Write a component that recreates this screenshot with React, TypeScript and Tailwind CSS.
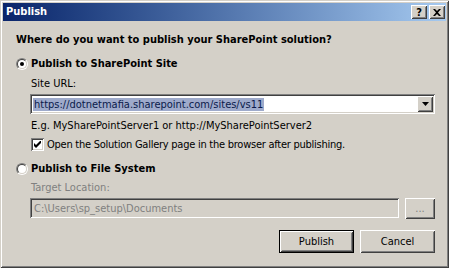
import type { ReactNode } from "react";

const font = { fontFamily: '"DejaVu Sans Condensed", Tahoma, "Liberation Sans", sans-serif' };

const sunken =
  "shadow-[inset_1px_1px_0_#808080,inset_-1px_-1px_0_#ffffff,inset_2px_2px_0_#404040,inset_-2px_-2px_0_#d4d0c8]";
const raised =
  "shadow-[inset_1px_1px_0_#ffffff,inset_-1px_-1px_0_#404040,inset_2px_2px_0_#d4d0c8,inset_-2px_-2px_0_#808080]";

function Radio({ checked }: { checked?: boolean }) {
  return (
    <div className="flex h-3 w-3 shrink-0 items-center justify-center rounded-full border border-t-[#808080] border-r-white border-b-white border-l-[#808080]">
      <div className="flex h-2.5 w-2.5 items-center justify-center rounded-full border border-t-[#404040] border-r-[#d4d0c8] border-b-[#d4d0c8] border-l-[#404040] bg-white">
        {checked && <div className="h-1 w-1 rounded-full bg-black" />}
      </div>
    </div>
  );
}

function Checkbox() {
  return (
    <div className={`flex h-[13px] w-[13px] shrink-0 items-center justify-center bg-white ${sunken}`}>
      <svg width="7" height="7" viewBox="0 0 7 7">
        <path d="M0 2v3l2 2l5-5v-3l-5 5z" fill="#000" />
      </svg>
    </div>
  );
}

function Button({ children, isDefault }: { children: ReactNode; isDefault?: boolean }) {
  return (
    <div className={`h-[23px] w-[75px] ${isDefault ? "border border-black" : ""}`}>
      <div className={`flex h-full w-full items-center justify-center text-[11px] text-black ${raised}`}>{children}</div>
    </div>
  );
}

export default function App() {
  return (
    <div
      className="h-[268px] w-[449px] bg-[#d4d0c8] p-[3px] shadow-[inset_1px_1px_0_#d4d0c8,inset_-1px_-1px_0_#404040,inset_2px_2px_0_#ffffff,inset_-2px_-2px_0_#808080] overflow-hidden"
      style={font}
    >
      {/* title bar */}
      <div className="flex h-[18px] items-center justify-between bg-gradient-to-r from-[#0a246a] to-[#a6caf0] pr-[1px] pl-[3px]">
        <span className="text-[11px] font-bold text-white">Publish</span>
        <div className="flex gap-[2px]">
          <div className={`flex h-[14px] w-[16px] items-center justify-center bg-[#d4d0c8] text-[11px] font-bold leading-none text-black ${raised}`}>?</div>
          <div className={`flex h-[14px] w-[16px] items-center justify-center bg-[#d4d0c8] ${raised}`}>
            <svg width="8" height="7" viewBox="0 0 8 7">
              <path d="M0 0h2l2 2l2-2h2l-3 3.5l3 3.5h-2l-2-2l-2 2h-2l3-3.5z" fill="#000" />
            </svg>
          </div>
        </div>
      </div>

      <div className="pr-[11px] pl-[13px] text-[11px] leading-[13px] text-black">
        <div className="mt-[12px] h-[13px] font-bold">Where do you want to publish your SharePoint solution?</div>

        <div className="mt-[11px] flex h-[13px] items-center gap-[3px]">
          <Radio checked />
          <span className="font-bold">Publish to SharePoint Site</span>
        </div>

        <div className="pl-[14px]">
          <div className="mt-[7px] h-[13px] pl-[1px]">Site URL:</div>
          <div className={`mt-[4px] flex h-[20px] items-center justify-between bg-white pr-[2px] pl-[2px] ${sunken}`}>
            <span className="ml-[1px] bg-[#9eaacb] px-[1px] text-[#0a1a4a]">https://dotnetmafia.sharepoint.com/sites/vs11</span>
            <div className={`flex h-[16px] w-[16px] items-center justify-center bg-[#d4d0c8] ${raised}`}>
              <svg width="7" height="4" viewBox="0 0 7 4">
                <path d="M0 0h7l-3.5 4z" fill="#000" />
              </svg>
            </div>
          </div>
          <div className="mt-[5px] h-[13px] pl-[1px]">E.g. MySharePointServer1 or http://MySharePointServer2</div>
          <div className="mt-[6px] flex h-[13px] items-center gap-[3px] pl-[1px]">
            <Checkbox />
            <span className="tracking-[-0.25px]">Open the Solution Gallery page in the browser after publishing.</span>
          </div>
        </div>

        <div className="mt-[11px] flex h-[13px] items-center gap-[3px]">
          <Radio />
          <span className="font-bold">Publish to File System</span>
        </div>

        <div className="pl-[14px]">
          <div className="mt-[6px] h-[13px] pl-[1px] text-[#808080]">Target Location:</div>
          <div className="mt-[4px] flex gap-[6px]">
            <div className={`flex h-[20px] flex-1 items-center pl-[4px] text-[#808080] ${sunken}`}>C:\Users\sp_setup\Documents</div>
            <div className={`flex h-[21px] w-[30px] items-center justify-center text-[#808080] ${raised}`}>...</div>
          </div>
          <div className="mt-[11px] flex justify-end gap-[6px]">
            <Button isDefault>Publish</Button>
            <Button>Cancel</Button>
          </div>
        </div>
      </div>
    </div>
  );
}
